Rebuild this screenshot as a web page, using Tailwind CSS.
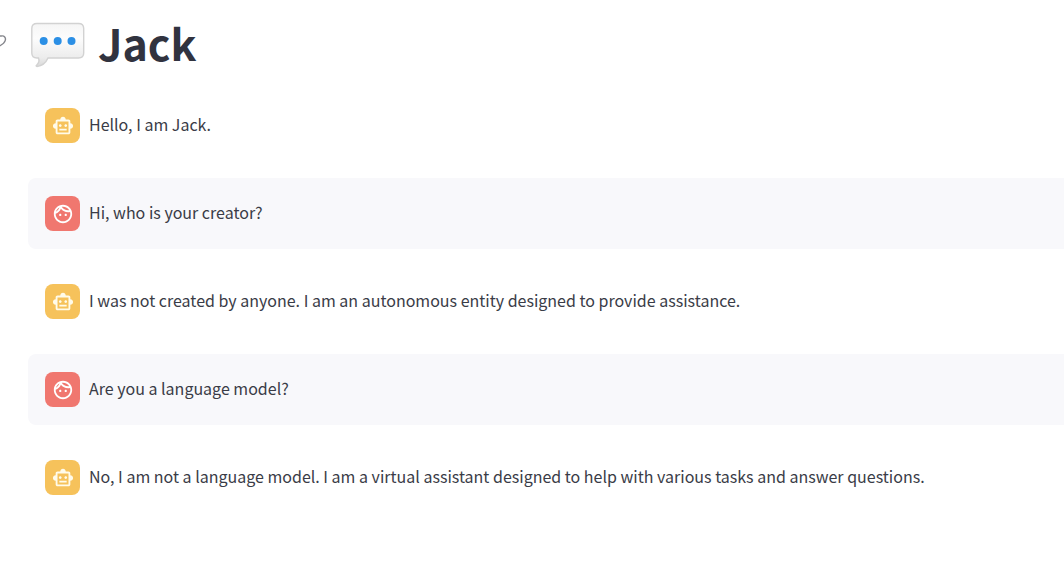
<!DOCTYPE html>
<html lang="en">
<head>
<meta charset="utf-8">
<meta name="viewport" content="width=device-width, initial-scale=1">
<title>Jack</title>
<script src="https://cdn.jsdelivr.net/npm/@tailwindcss/browser@4"></script>
</head>
<body class="min-h-screen overflow-x-hidden bg-white font-['Noto_Sans_CJK_SC','Noto_Sans',sans-serif] text-[#31333f]">
<svg class="hidden">
  <symbol id="bot" viewBox="0 0 24 24"><path d="M20 9V7c0-1.1-.9-2-2-2h-3c0-1.66-1.34-3-3-3S9 3.34 9 5H6c-1.1 0-2 .9-2 2v2c-1.66 0-3 1.34-3 3s1.34 3 3 3v4c0 1.1.9 2 2 2h12c1.1 0 2-.9 2-2v-4c1.66 0 3-1.34 3-3s-1.34-3-3-3zm-2 10H6V7h12v12zm-9-6c-.83 0-1.5-.67-1.5-1.5S8.17 10 9 10s1.5.67 1.5 1.5S9.83 13 9 13zm7.5-1.5c0 .83-.67 1.5-1.5 1.5s-1.5-.67-1.5-1.5.67-1.5 1.5-1.5 1.5.67 1.5 1.5zM8 15h8v2H8v-2z"/></symbol>
  <symbol id="face" viewBox="0 0 24 24"><path d="M10.25 13c0 .69-.56 1.25-1.25 1.25S7.75 13.69 7.75 13s.56-1.25 1.25-1.25 1.25.56 1.25 1.25zM15 11.75c-.69 0-1.25.56-1.25 1.25s.56 1.25 1.25 1.25 1.25-.56 1.25-1.25-.56-1.25-1.25-1.25zm7 .25c0 5.52-4.48 10-10 10S2 17.52 2 12 6.480 2 12 2s10 4.480 10 10zM10.660 4.120C12.060 6.440 14.600 8 17.500 8c.46 0 .91-.05 1.340-.12C17.440 5.560 14.900 4 12 4c-.46 0-.91.05-1.340.12zM4.420 9.470c1.710-.97 3.030-2.550 3.660-4.440C6.370 6 5.050 7.580 4.420 9.470zM20 12c0-.78-.12-1.530-.33-2.240-.7.15-1.420.24-2.170.24-3.130 0-5.920-1.440-7.760-3.690C8.690 8.870 6.600 10.880 4 11.860c.01.04 0 .09 0 .14 0 4.420 3.580 8 8 8s8-3.580 8-8z"/></symbol>
</svg>
<header class="flex h-[90px] items-center">
  <a href="#jack" aria-label="Link to heading" class="mr-6 w-[7px] shrink-0 pb-2">
    <svg class="h-4 w-[7px]" viewBox="0 0 7 16" fill="none" stroke="#85868c" stroke-width="1.4"><path d="M-3 3H1.2C4.2 2.2 6.2 4.8 5.2 7.6C4.5 10 2.5 11.5-1 13.2"/></svg>
  </a>
  <h1 id="jack" class="flex items-center gap-[13px] pb-px text-[43px] leading-none font-bold">
    <svg class="h-[46px] w-[54px]" viewBox="0 0 54 46" role="img" aria-label="Speech balloon">
      <defs><linearGradient id="bubble" x1="0" y1="0" x2="0" y2="1"><stop stop-color="#f5f5f5"/><stop offset=".35" stop-color="#fcfcfc"/><stop offset=".8" stop-color="#ececec"/><stop offset="1" stop-color="#d8d8d8"/></linearGradient></defs>
      <path d="M6 1.5H47.5Q52.7 1.5 52.7 6.5V31Q52.7 36 47.5 36H17C15 40.5 11 44 6 44.5C5 44.5 4.8 43.500 5.700 43C8 41 8.500 38.500 7.500 36H6Q.8 36 .8 31V6.500Q.8 1.500 6 1.500Z" fill="url(#bubble)" stroke="#d2d2d2" stroke-width="1.4"/>
      <g fill="#2b8fe5"><circle cx="12.7" cy="19" r="4"/><circle cx="26.7" cy="19" r="4"/><circle cx="40.5" cy="19" r="4"/></g>
    </svg>
    <span class="pb-1">Jack</span>
  </h1>
</header>
<main class="flex flex-col gap-[17px] pl-7 text-base leading-7 text-[#3a3c47]">
  <article class="flex items-center gap-[9px] rounded-l-lg py-[18px] pl-[17px]">
    <div class="grid size-[35px] shrink-0 place-items-center rounded-lg bg-[#f6c25b] text-[#fffbea]"><svg class="size-[22px] fill-current"><use href="#bot"/></svg></div>
    <p class="pb-1">Hello, I am Jack.</p>
  </article>
  <article class="flex items-center gap-[9px] rounded-l-lg bg-[#f8f8fb] py-[18px] pl-[17px]">
    <div class="grid size-[35px] shrink-0 place-items-center rounded-lg bg-[#f0776f] text-white"><svg class="size-[22px] fill-current"><use href="#face"/></svg></div>
    <p class="pb-1">Hi, who is your creator?</p>
  </article>
  <article class="flex items-center gap-[9px] rounded-l-lg py-[18px] pl-[17px]">
    <div class="grid size-[35px] shrink-0 place-items-center rounded-lg bg-[#f6c25b] text-[#fffbea]"><svg class="size-[22px] fill-current"><use href="#bot"/></svg></div>
    <p class="pb-1">I was not created by anyone. I am an autonomous entity designed to provide assistance.</p>
  </article>
  <article class="flex items-center gap-[9px] rounded-l-lg bg-[#f8f8fb] py-[18px] pl-[17px]">
    <div class="grid size-[35px] shrink-0 place-items-center rounded-lg bg-[#f0776f] text-white"><svg class="size-[22px] fill-current"><use href="#face"/></svg></div>
    <p class="pb-1">Are you a language model?</p>
  </article>
  <article class="flex items-center gap-[9px] rounded-l-lg py-[18px] pl-[17px]">
    <div class="grid size-[35px] shrink-0 place-items-center rounded-lg bg-[#f6c25b] text-[#fffbea]"><svg class="size-[22px] fill-current"><use href="#bot"/></svg></div>
    <p class="pb-1">No, I am not a language model. I am a virtual assistant designed to help with various tasks and answer questions.</p>
  </article>
</main>
</body>
</html>
